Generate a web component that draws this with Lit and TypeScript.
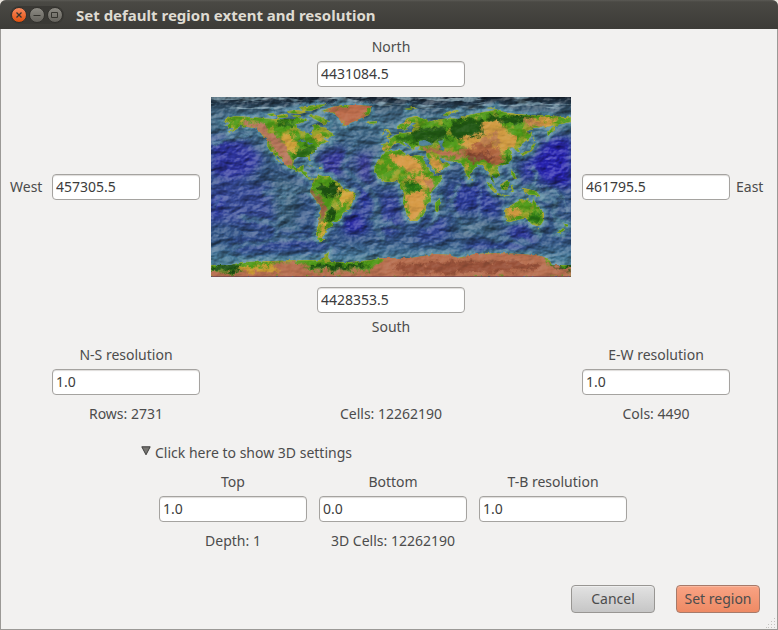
import { LitElement, html, css, svg } from "lit";
import { customElement, property, state } from "lit/decorators.js";

/* Relief map in plate carree: x = longitude + 180, y = 90 - latitude. */
const LAND = [
  // North and Central America
  "M12,24L16,21 24,19 40,20 52,21 62,22 72,22 84,22 86,20 92,22 98,22 94,25 86,27 86,31 93,34 98,35 99,38 101,38 101,34 103,31 101,28 106,27 111,30 115,31 118,34 124,38 120,40 112,41 116,44 119,44 114,46 110,47 108,49 104,52 104,55 99,58 99,61 100,64 98,63 97,60 91,60 86,60 83,63 82,68 85,71 89,71 90,69 93,68 92,74 96,75 97,80 101,81 103,82 100,83 96,81 92,77 86,74 80,72 74,68 70,62 66,58 65,60 70,67 67,64 63,57 59,54 56,49 56,42 52,39 48,34 44,31 36,30 30,29 26,32 20,35 17,36 23,31 18,31 15,28 19,26z",
  // Greenland and the Arctic islands
  "M110,14L118,11 130,8 148,8 160,9 160,14 158,18 150,21 144,24 139,26 136,30 133,29 130,25 128,21 122,16z",
  "M100,17L108,19 118,24 114,28 107,24 98,19z",
  "M56,17L64,16 65,19 59,19zM66,18L76,17 78,20 72,21 66,21z",
  "M88,10L104,8 116,7 108,11 100,14 92,14zM76,14L86,13 96,15 88,17 77,16zM80,18L88,18 90,20 83,20z",
  // South America
  "M103,82L108,78 112,79 118,79 123,83 129,86 130,90 136,92 141,94 145,97 144,101 141,105 140,111 136,114 132,116 130,122 126,125 122,126 122,129 118,131 115,132 116,135 113,138 112,141 114,144 109,144 106,142 105,136 107,128 109,118 110,109 106,105 102,99 99,95 100,91 102,88z",
  // Africa and Madagascar
  "M164,69L163,75 167,80 172,85 180,85 186,84 189,86 189,91 193,96 192,104 194,112 196,119 199,124 206,124 212,119 215,113 215,108 220,104 220,96 224,91 230,84 231,78 224,79 219,74 215,67 212,60 214,59 205,58 200,59 195,57 190,53 180,54 174,54 170,59 167,63z",
  "M224,106L229,101 230,106 227,115 224,115z",
  // Eurasia
  "M171,47L171,53 175,54 179,53 180,50 183,47 188,46 192,48 198,52 196,50 192,45 195,45 200,50 203,54 204,50 209,49 207,53 216,54 215,58 218,65 223,73 225,77 232,73 239,68 236,65 231,66 228,60 237,64 247,65 252,69 254,75 257,82 260,79 261,74 267,68 272,68 274,73 278,74 279,80 283,87 284,88 282,82 280,77 285,81 289,78 286,71 290,69 296,67 301,62 301,55 298,52 302,50 306,55 309,55 307,51 312,46 320,40 321,36 315,35 322,31 335,30 343,28 336,36 337,39 344,33 344,29 355,26 360,25 360,20 350,20 340,18 320,18 305,17 293,15 285,13 272,15 262,17 252,19 248,22 240,21 230,22 220,24 213,22 205,19 196,21 192,26 186,29 186,32 191,32 193,34 197,30 202,25 205,25 202,30 210,30 202,31 201,35 192,36 188,35 188,37 184,38 180,41 176,41 179,43 178,46z",
  "M232,18L236,15 246,13 249,14 240,16 235,19zM193,12L202,10 207,11 198,13zM275,11L284,10 283,12z",
  "M175,40L178,37 174,32 177,32 181,38 180,39zM170,38L174,35 174,37zM156,25L166,24 166,26 160,27z",
  // Japan, the Indonesian arc, New Guinea and the Philippines
  "M310,57L315,54 319,54 321,48 325,46 322,50 321,54 316,56 312,59zM322,38L324,44 323,44z",
  "M275,84L281,88 286,95 284,96 279,91zM286,96L294,98 300,98 294,99 286,98z",
  "M289,88L296,83 299,85 296,93 291,93zM300,89L305,88 301,90 303,95 300,95z",
  "M311,91L317,92 325,94 330,100 324,98 318,98 313,94zM300,72L303,76 306,82 303,82 300,76zM260,81L262,83 261,84z",
  // Australia, Tasmania and New Zealand
  "M294,112L302,107 307,104 311,102 315,103 317,102 321,107 322,101 326,109 333,116 333,123 330,128 326,129 320,127 317,122 311,122 303,124 298,125 295,124z",
  "M325,131L328,131 327,134zM352,125L358,128 355,131zM352,131L354,133 349,136 346,136z",
  "M95,68L102,69 106,70 99,69zM108,70L112,71 108,72z",
  // Antarctica
  "M0,168L20,168 30,165 60,164 90,163 108,163 114,160 113,158 118,155 117,160 120,165 140,165 160,163 170,161 200,161 225,157 240,158 246,161 264,157 285,156 310,157 330,159 338,162 341,168 360,168 360,180 0,180z",
].join("");

const LAKES =
  "M208,48L208,44 214,43 220,46 221,48 212,49zM227,44L233,43 231,48 234,52 230,53 229,48zM88,33L94,31 98,35 96,36zM86,44L94,42 95,44 91,45zM96,46L103,46 98,48zM212,62L215,62 223,76 221,76z";

interface Patch {
  c: string;
  d: string;
}

const SEA: Patch[] = [
  { c: "#2f34a0", d: "M0,40L35,44 52,62 40,78 20,84 0,78z" },
  { c: "#344a96", d: "M0,84L60,88 92,120 60,134 0,124z" },
  { c: "#2f34a8", d: "M0,102L12,96 8,120 0,128z" },
  { c: "#34389c", d: "M108,58L132,50 138,66 124,82 110,74z" },
  { c: "#3a3a9a", d: "M144,58L160,56 160,86 150,84z" },
  { c: "#2528a4", d: "M130,122L148,114 158,134 136,138z" },
  { c: "#2b31a6", d: "M148,90L160,96 158,122 150,112z" },
  { c: "#31409a", d: "M170,96L188,100 190,134 172,140z" },
  { c: "#2b3a9a", d: "M238,90L264,84 288,104 288,122 262,112 240,118z" },
  { c: "#30449a", d: "M214,122L234,118 236,142 204,146z" },
  { c: "#2524b0", d: "M336,42L360,40 360,92 330,84 318,68z" },
  { c: "#2b30a3", d: "M310,64L320,62 322,82 312,84z" },
  { c: "#2f389e", d: "M300,128L316,128 326,148 296,142z" },
  { c: "#2d4492", d: "M20,142L92,136 130,152 24,156z" },
  { c: "#2f4394", d: "M260,142L320,146 310,154 250,154z" },
  { c: "#446a88", d: "M0,14L360,14 360,22 0,26z" },
  { c: "#3b617e", d: "M60,78L90,84 86,130 64,132zM244,124L290,124 288,138 250,142z" },
];

const RELIEF: Patch[] = [
  // dark forest
  { c: "#2a6a14", d: "M84,54L98,48 104,52 98,62 82,64zM66,24L84,24 78,30 66,28z" },
  { c: "#1c4f10", d: "M106,90L122,86 132,92 124,100 110,98zM118,112L124,112 124,122 116,126z" },
  { c: "#1f5612", d: "M238,24L270,22 276,34 262,42 240,42zM200,34L232,28 238,44 204,46zM276,18L320,20 320,26 280,26z" },
  { c: "#2c6d14", d: "M184,40L204,38 204,44 186,44zM296,58L302,60 300,68 290,68zM280,76L290,76 286,88 278,84z" },
  { c: "#267314", d: "M192,86L208,86 206,94 194,94zM318,116L328,118 328,126 320,124zM289,88L296,86 296,93 290,93z" },
  { c: "#1b4d12", d: "M0,168L28,168 32,174 0,173zM96,168L150,167 158,170 130,173 102,172zM341,168L360,168 360,173 344,172z" },
  // dry uplands
  { c: "#d0a23a", d: "M70,36L82,38 84,56 72,52zM104,38L116,40 108,46zM26,22L36,21 30,26z" },
  { c: "#d3a63b", d: "M128,92L142,94 142,102 132,110 128,104zM110,124L116,124 112,140 108,140z" },
  { c: "#d79a45", d: "M180,58L204,60 214,72 200,76 180,66zM194,98L214,92 214,110 206,122 198,122zM216,56L228,64 232,72 224,74z" },
  { c: "#d99b48", d: "M190,82L208,78 224,84 214,92 204,84zM171,49L178,49 176,53 171,53z" },
  { c: "#d19b42", d: "M250,42L276,34 296,30 306,44 296,56 250,50zM272,24L290,24 288,34 270,34z" },
  { c: "#d49b42", d: "M312,22L350,22 340,28 320,30zM297,110L312,112 308,120 297,120zM192,24L202,20 192,32zM254,66L258,68 256,74z" },
  { c: "#cb9b32", d: "M28,170L66,168 72,175 34,175z" },
  // high rock and ice
  { c: "#b8775c", d: "M34,24L50,26 62,36 74,46 80,62 82,72 72,66 64,54 56,44 46,32 34,30z" },
  { c: "#bc6c4b", d: "M112,12L150,5 162,8 152,22 136,30 124,18z" },
  { c: "#985f43", d: "M100,88L104,96 112,104 116,112 112,122 108,126 110,110 100,98z" },
  { c: "#b87450", d: "M212,48L230,52 250,54 256,62 246,60 236,64 224,56 212,54z" },
  { c: "#b0653f", d: "M250,54L270,46 288,50 292,62 286,68 262,64z" },
  { c: "#83442f", d: "M254,58L276,56 284,60 276,66 260,63z" },
  { c: "#be8050", d: "M268,40L286,36 290,44 274,48zM312,24L334,26 330,29 314,28zM216,84L222,82 222,92 216,94z" },
  { c: "#b86f50", d: "M60,166L90,164 100,174 160,173 172,160 226,154 246,159 264,154 330,156 338,168 360,174 360,182 0,182 0,175 70,175z" },
  { c: "#9a523a", d: "M180,168L250,164 330,166 326,172 270,176 190,176z" },
];

const RIDGES =
  "M140,30L146,44 138,56 132,70 146,84 158,92 166,104 166,130 172,144M212,132L226,120 240,112 244,96 248,86M240,112L252,128 280,140 320,146M75,90L70,120 64,142M52,96L96,90M20,150L80,140 110,144M330,96L344,104 344,122 350,140M334,92L352,100M320,70L326,80 320,90M0,46L18,42 40,36M28,120L90,132M160,122L190,132";

const FINE_RIDGES =
  "M268,88L268,124M0,46L14,43 40,38M334,96L346,104 340,116 348,126M340,94L352,100 356,116M248,88L244,100 228,112 222,126M322,66L328,76 322,88 332,92M170,130L184,120M60,104L98,92M4,112L8,98";

@customElement("relief-map")
export class ReliefMap extends LitElement {
  static styles = css`
    :host { display: block; width: 360px; max-width: 100%; }
    svg { display: block; width: 100%; }
    .hard { mix-blend-mode: hard-light; }
  `;

  render() {
    return html`<svg viewBox="0 0 360 180" role="img" aria-label="World relief map">
      <defs>
        <filter id="soft" x="-5%" y="-5%" width="110%" height="110%">
          <feGaussianBlur stdDeviation="4"></feGaussianBlur>
        </filter>
        <filter id="shelf" filterUnits="userSpaceOnUse" x="-10" y="-10" width="380" height="200">
          <feGaussianBlur stdDeviation="1" result="b"></feGaussianBlur>
          <feTurbulence type="fractalNoise" baseFrequency="0.12" numOctaves="3" seed="4" result="n"></feTurbulence>
          <feDisplacementMap in="b" in2="n" scale="7" xChannelSelector="R" yChannelSelector="G"></feDisplacementMap>
        </filter>
        <filter id="coast" filterUnits="userSpaceOnUse" x="-10" y="-10" width="380" height="200" color-interpolation-filters="sRGB">
          <feTurbulence type="fractalNoise" baseFrequency="0.25" numOctaves="2" seed="9" result="n"></feTurbulence>
          <feDisplacementMap in="SourceGraphic" in2="n" scale="3" xChannelSelector="R" yChannelSelector="G"></feDisplacementMap>
        </filter>
        <filter id="patch" filterUnits="userSpaceOnUse" x="-10" y="-10" width="380" height="200" color-interpolation-filters="sRGB">
          <feGaussianBlur stdDeviation="1" result="b"></feGaussianBlur>
          <feTurbulence type="fractalNoise" baseFrequency="0.16" numOctaves="4" seed="2" result="n"></feTurbulence>
          <feDisplacementMap in="b" in2="n" scale="12" xChannelSelector="R" yChannelSelector="G"></feDisplacementMap>
        </filter>
        <filter id="mottle" x="0" y="0" width="100%" height="100%" color-interpolation-filters="sRGB">
          <feTurbulence type="fractalNoise" baseFrequency="0.1" numOctaves="3" seed="14"></feTurbulence>
          <feColorMatrix values="0 0 0 0 0.8  0 0 0 0 0.66  0 0 0 0 0.22  6 0 0 0 -3"></feColorMatrix>
        </filter>
        <filter id="seabed" x="0" y="0" width="100%" height="100%" color-interpolation-filters="sRGB">
          <feTurbulence type="fractalNoise" baseFrequency="0.05 0.09" numOctaves="5" seed="21"></feTurbulence>
          <feColorMatrix values="0 0 0 0 0  0 0 0 0 0  0 0 0 0 0  1 0 0 0 0"></feColorMatrix>
          <feDiffuseLighting surfaceScale="4" diffuseConstant="0.72" lighting-color="#ffffff">
            <feDistantLight azimuth="225" elevation="45"></feDistantLight>
          </feDiffuseLighting>
        </filter>
        <filter id="polar" x="0" y="0" width="100%" height="100%" color-interpolation-filters="sRGB">
          <feTurbulence type="fractalNoise" baseFrequency="0.04 0.2" numOctaves="3" seed="5"></feTurbulence>
          <feColorMatrix values="0 0 0 0 0.6  0 0 0 0 0.74  0 0 0 0 0.8  8 0 0 0 -4.2"></feColorMatrix>
        </filter>
        <linearGradient id="sea" x1="0" y1="0" x2="0" y2="1">
          <stop offset="0" stop-color="#15212f"></stop>
          <stop offset="0.05" stop-color="#2c465c"></stop>
          <stop offset="0.12" stop-color="#406a84"></stop>
          <stop offset="0.5" stop-color="#345486"></stop>
          <stop offset="0.8" stop-color="#345788"></stop>
          <stop offset="0.9" stop-color="#487c9a"></stop>
        </linearGradient>
        <clipPath id="frame"><rect width="360" height="180"></rect></clipPath>
        <clipPath id="land"><path d=${LAND}></path></clipPath>
      </defs>
      <g clip-path="url(#frame)">
        <rect width="360" height="180" fill="url(#sea)"></rect>
        <g filter="url(#soft)">${SEA.map((p) => svg`<path d=${p.d} fill=${p.c}></path>`)}</g>
        <rect width="360" height="12" filter="url(#polar)" opacity="0.6"></rect>
        <g filter="url(#shelf)" fill="none">
          <path d=${RIDGES} stroke="#406a8c" stroke-width="6" opacity="0.7"></path>
          <path d=${LAND} stroke="#44748f" stroke-width="7"></path>
          <path d=${LAND} stroke="#5a92a6" stroke-width="3" opacity="0.7"></path>
          <path d=${RIDGES} stroke="#5f93aa" stroke-width="1" opacity="0.5"></path>
          <path d=${FINE_RIDGES} stroke="#6fa3b4" stroke-width="1"></path>
        </g>
        <rect class="hard" width="360" height="180" filter="url(#seabed)" opacity="0.5"></rect>
        <g filter="url(#coast)">
          <g clip-path="url(#land)">
            <path d=${LAND} fill="#4f9a18" stroke="#a3ac3c" stroke-width="1"></path>
            <rect width="360" height="165" filter="url(#mottle)" opacity="0.6"></rect>
            <g filter="url(#patch)">${RELIEF.map((p) => svg`<path d=${p.d} fill=${p.c}></path>`)}</g>
          </g>
          <path d=${LAKES} fill="#4b7f96"></path>
        </g>
        <rect class="hard" width="360" height="180" filter="url(#seabed)" opacity="0.2"></rect>
        <rect y="179" width="360" height="1" fill="#5f3a50" opacity="0.6"></rect>
      </g>
    </svg>`;
  }
}

@customElement("value-field")
export class ValueField extends LitElement {
  @property() label = "";
  @property() value = "";
  @property() placement = "above";

  static styles = css`
    :host { display: block; }
    .field { display: flex; flex-direction: column; align-items: center; gap: 4px; }
    .below { flex-direction: column-reverse; }
    .left { flex-direction: row; gap: 6px; }
    .right { flex-direction: row-reverse; gap: 6px; }
    .left label, .right label { width: 36px; }
    label { line-height: 20px; white-space: nowrap; }
    input {
      box-sizing: border-box;
      width: 148px;
      height: 26px;
      margin: 0;
      padding: 0 4px 1px 3px;
      border: 1px solid #a5a3a0;
      border-radius: 4px;
      background: #fff;
      box-shadow: inset 0 1px 1px #dedcda;
      color: #3c3c3c;
      font: inherit;
      outline: none;
    }
  `;

  render() {
    return html`<div class="field ${this.placement}">
      <label for="value">${this.label}</label>
      <input id="value" type="text" .value=${this.value} />
    </div>`;
  }
}

@customElement("app-root")
export class AppRoot extends LitElement {
  @state() private rows = 2731;
  @state() private cols = 4490;
  @state() private depth = 1;

  static styles = css`
    :host {
      display: block;
      font: 14px/20px "Noto Sans", "Open Sans", sans-serif;
      color: #4c4c4c;
      background: #e9e4dc;
    }
    .window {
      box-sizing: border-box;
      min-height: 100vh;
      display: flex;
      flex-direction: column;
      border-radius: 6px 6px 0 0;
      overflow: hidden;
      background: #f2f1f0;
      box-shadow: inset 0 0 0 1px #9b9996;
    }
    .titlebar {
      display: flex;
      align-items: center;
      gap: 12px;
      height: 29px;
      padding: 0 10px;
      background: linear-gradient(#5b5a55 0, #4a4944 2px, #3c3b37 100%);
    }
    .controls {
      display: flex;
      gap: 2px;
      padding: 1px;
      border-radius: 10px;
      background: #3a3935;
    }
    .controls button {
      display: block;
      width: 16px;
      height: 16px;
      padding: 0;
      border: 1px solid #33322e;
      border-radius: 50%;
      background: linear-gradient(#8c8a83, #65635d);
    }
    .controls .close { background: linear-gradient(#f98a5f, #e2500e); }
    .controls svg { display: block; width: 14px; height: 14px; fill: none; stroke: #35342f; }
    h1 {
      margin: 0;
      font-size: 15px;
      line-height: 20px;
      font-weight: 700;
      color: #dfdbd2;
    }
    form {
      display: flex;
      flex-direction: column;
      flex: 1;
      padding: 8px 6px 17px 10px;
    }
    .extent { display: flex; flex-direction: column; align-items: center; gap: 10px; }
    .middle {
      align-self: stretch;
      display: flex;
      justify-content: space-between;
      align-items: center;
    }
    .resolution {
      display: grid;
      grid-template-columns: 148px 1fr 148px;
      row-gap: 9px;
      padding: 0 42px;
      margin-top: 8px;
      text-align: center;
    }
    .east { grid-column: 3; }
    details { width: 500px; margin: 19px auto 0; }
    summary { display: flex; align-items: center; gap: 4px; list-style: none; }
    summary svg { width: 10px; height: 10px; margin-bottom: 4px; }
    .depths {
      display: grid;
      grid-template-columns: repeat(3, 148px);
      gap: 9px 12px;
      padding: 9px 0 0 18px;
      text-align: center;
    }
    .actions {
      display: flex;
      justify-content: flex-end;
      gap: 21px;
      margin-top: auto;
      padding-right: 12px;
    }
    .actions button {
      width: 84px;
      height: 28px;
      padding: 0;
      border: 1px solid #989693;
      border-radius: 4px;
      background: linear-gradient(#e2e2e2, #c6c6c6);
      box-shadow: inset 0 1px 0 #eeeeee;
      color: #4c4c4c;
      font: inherit;
      white-space: nowrap;
    }
    .actions .primary {
      border-color: #a67a6a;
      background: linear-gradient(#f8a384, #ee8a64);
      box-shadow: inset 0 1px 0 #fbb9a0;
    }
    .grip { position: absolute; right: 2px; bottom: 2px; width: 10px; height: 10px; }
    .shell { position: relative; }
  `;

  render() {
    const cells = this.rows * this.cols;
    return html`<div class="shell"><main class="window">
      <header class="titlebar">
        <div class="controls">
          <button class="close" aria-label="Close"><svg viewBox="0 0 14 14"><path d="M4.5 4.5l5 5M9.5 4.5l-5 5" stroke-width="1.3"></path></svg></button>
          <button aria-label="Minimize"><svg viewBox="0 0 14 14"><path d="M3.500 7.500h7"></path></svg></button>
          <button aria-label="Maximize"><svg viewBox="0 0 14 14"><path d="M3.500 4.500h6v5h-6z"></path></svg></button>
        </div>
        <h1>Set default region extent and resolution</h1>
      </header>
      <form @submit=${(e: Event) => e.preventDefault()}>
        <section class="extent">
          <value-field label="North" value="4431084.5"></value-field>
          <div class="middle">
            <value-field label="West" value="457305.5" placement="left"></value-field>
            <relief-map></relief-map>
            <value-field label="East" value="461795.5" placement="right"></value-field>
          </div>
          <value-field label="South" value="4428353.5" placement="below"></value-field>
        </section>
        <section class="resolution">
          <value-field label="N-S resolution" value="1.0"></value-field>
          <value-field class="east" label="E-W resolution" value="1.0"></value-field>
          <span>Rows: ${this.rows}</span>
          <span>Cells: ${cells}</span>
          <span>Cols: ${this.cols}</span>
        </section>
        <details open>
          <summary>
            <svg viewBox="0 0 10 10" aria-hidden="true"><path d="M.8.8h8.400L5 8.800z" fill="#777672" stroke="#3e3e3c"></path></svg>
            Click here to show 3D settings
          </summary>
          <div class="depths">
            <value-field label="Top" value="1.0"></value-field>
            <value-field label="Bottom" value="0.0"></value-field>
            <value-field label="T-B resolution" value="1.0"></value-field>
            <span>Depth: ${this.depth}</span>
            <span>3D Cells: ${cells * this.depth}</span>
          </div>
        </details>
        <footer class="actions">
          <button type="button">Cancel</button>
          <button class="primary" type="submit">Set region</button>
        </footer>
      </form>
    </main>
    <svg class="grip" viewBox="0 0 10 10" aria-hidden="true"><path d="M8 0h1v1h-1zM5 3h1v1h-1zM8 3h1v1h-1zM2 6h1v1h-1zM5 6h1v1h-1zM8 6h1v1h-1zM0 9h1v1h-1zM2 9h1v1h-1zM5 9h1v1h-1zM8 9h1v1h-1z" fill="#c4c2bf"></path></svg>
    </div>`;
  }
}
